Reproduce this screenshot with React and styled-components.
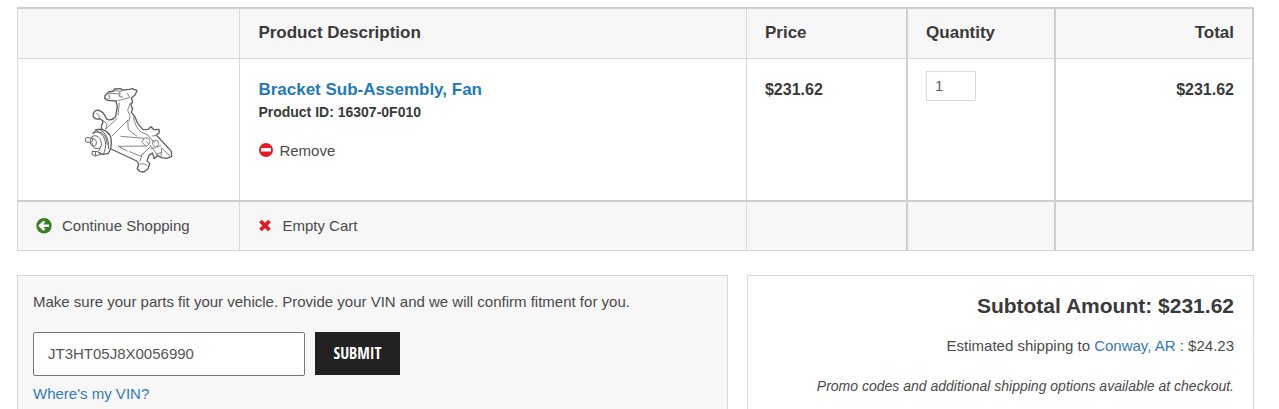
import React, { useState } from 'react';
import styled, { createGlobalStyle, css } from 'styled-components';

const GlobalStyle = createGlobalStyle`
  * {
    box-sizing: border-box;
  }
  html {
    scrollbar-width: none;
  }
  body {
    margin: 0;
    background: #fff;
    color: #4a4a4a;
    font-family: "Liberation Sans", Arial, Helvetica, sans-serif;
    font-size: 15px;
    line-height: 20px;
  }
`;

const Page = styled.main`
  padding: 7px 25px 0 17px;
`;

const CartTable = styled.table`
  width: 100%;
  border-collapse: collapse;
  table-layout: fixed;
  border: 1px solid #d6d6d6;
  border-top: 2px solid #cfcfcf;
  border-right: 2px solid #cfcfcf;
`;

const Col = styled.col`
  width: ${(props) => props.$width};
`;

const cell = css`
  padding: 0 18px;
  text-align: ${(props) => props.$align || 'left'};
  border-left: ${(props) => (props.$heavy ? '2px solid #cfcfcf' : '1px solid #d9d9d9')};
`;

const HeadCell = styled.th`
  ${cell}
  height: 50px;
  background: #f7f7f7;
  border-bottom: 1px solid #d9d9d9;
  color: #3a3a3a;
  font-size: 17px;
  font-weight: bold;
`;

const BodyCell = styled.td`
  ${cell}
  height: 143px;
  padding-top: ${(props) => props.$top || '21px'};
  vertical-align: top;
`;

const FootCell = styled.td`
  ${cell}
  height: 49px;
  background: #f7f7f7;
  border-top: 2px solid #cfcfcf;
`;

const Amount = styled.strong`
  color: #3a3a3a;
  font-size: 16px;
`;

const PartImage = styled.svg`
  display: block;
  width: 90px;
  height: 88px;
  margin: 0 auto;
`;

const ProductLink = styled.a`
  display: block;
  color: #1f7ab5;
  font-size: 17px;
  font-weight: bold;
  text-decoration: none;
`;

const ProductId = styled.div`
  margin-bottom: 17px;
  color: #3a3a3a;
  font-size: 14px;
  font-weight: bold;
  line-height: 24px;
`;

const Action = styled.button`
  display: flex;
  align-items: center;
  gap: ${(props) => props.$gap || '10px'};
  padding: 0;
  border: 0;
  background: none;
  color: inherit;
  font: inherit;
  cursor: pointer;
`;

const ShopLink = styled(Action).attrs({ as: 'a' })`
  text-decoration: none;
`;

const Icon = styled.svg`
  flex: none;
  width: ${(props) => props.$size}px;
  height: ${(props) => props.$size}px;
`;

const Quantity = styled.input`
  display: block;
  width: 50px;
  height: 30px;
  padding: 0 8px;
  border: 1px solid #d9d9d9;
  color: #666;
  font: inherit;
`;

const Panels = styled.div`
  display: grid;
  grid-template-columns: 7fr 5fr;
  gap: 19px;
  margin-top: 24px;
`;

const VinPanel = styled.form`
  padding: 16px 15px;
  border: 1px solid #d6d6d6;
  background: #f7f7f7;
`;

const SummaryPanel = styled.section`
  padding: 16px 19px;
  border: 1px solid #d9d9d9;
  text-align: right;
`;

const VinLabel = styled.label`
  display: block;
  margin-bottom: 20px;
`;

const VinRow = styled.div`
  display: flex;
  gap: 10px;
  margin-bottom: 8px;
`;

const VinInput = styled.input`
  width: 272px;
  height: 44px;
  padding: 0 14px;
  border: 1px solid #767676;
  border-radius: 2px;
  background: #fff;
  color: #555;
  font: inherit;
`;

const Submit = styled.button`
  width: 85px;
  height: 43px;
  padding: 0;
  border: 0;
  background: #222;
  color: #fff;
  font-family: "Open Sans Condensed", "Liberation Sans Narrow", "Open Sans", sans-serif;
  font-size: 16px;
  font-weight: bold;
  text-transform: uppercase;
`;

const TextLink = styled.a`
  color: #337ab7;
  text-decoration: none;
`;

const Subtotal = styled.h2`
  margin: 0 0 16px;
  color: #3a3a3a;
  font-size: 21px;
  line-height: 28px;
`;

const Shipping = styled.p`
  margin: 0 0 20px;
`;

const Promo = styled.p`
  margin: 0;
  font-size: 14px;
  font-style: italic;
`;

const BracketDrawing = () => (
  <PartImage viewBox="42 36 270 264" role="img" aria-label="Bracket Sub-Assembly, Fan">
    <g fill="none" stroke="#606060" strokeWidth="4" strokeLinejoin="round" strokeLinecap="round">
      <path d="M138 78 L113 76 L104 70 L105 62 L116 51 L131 48 L133 42 L153 41 L157 45 L178 43 L187 41 L201 47 L195 60 L184 69 L188 80 L183 90 L188 102 L184 112 L194 124 L203 145 L219 164 L234 163 L243 155 L252 164 L267 163 L268 173 L259 180 L304 229 L305 244 L290 250 L273 248 L263 241 L253 251 L247 234 L237 241 L231 257 L239 266 L234 281 L222 291 L209 289 L202 282 L206 267 L200 258 L123 222" />
      <path d="M138 78 L142 94 L137 124 Q125 140 110 132 L103 119 Q90 102 76 107 Q68 113 70 125 Q76 136 88 131 L100 138 L94 154 L96 163" />
      <path d="M70 176 Q80 160 96 163 Q119 171 123 190 Q127 217 115 235 L98 238 L86 232" />
    </g>
    <g fill="none" stroke="#666" strokeWidth="3" strokeLinejoin="round" strokeLinecap="round">
      <path d="M76 164 L97 164 M68 174 Q88 164 100 184 Q114 207 101 236 M82 170 Q110 172 112 208 M91 165 Q118 178 116 221" />
      <path d="M67 184 Q80 178 89 190 Q99 206 90 220 L75 220 L61 207 Q58 193 67 184 M68 191 Q80 191 79 205 Q77 216 68 212 Q62 203 68 191" />
      <path d="M65 190 L51 187 L45 192 L48 201 L60 202 M67 229 L66 239 L76 243 L94 237 M67 229 L82 230 L91 222 M76 242 L77 229" />
    </g>
    <g fill="none" stroke="#858585" strokeWidth="3" strokeLinejoin="round" strokeLinecap="round">
      <path d="M116 53 L119 69 L110 74 M120 55 L151 57 M144 77 L178 68 M155 45 L148 55 L149 65 L158 66 M172 55 L179 66 M133 47 L151 49" />
      <path d="M148 84 L144 120 M182 83 L173 106 L180 122 L177 138 M173 136 L126 183 M173 136 L175 164 L200 183 M106 163 L142 130 M190 126 Q196 158 213 171 L235 181 M102 139 L111 147 L107 163" />
      <path d="M153 184 L222 190 Q235 185 240 197 Q240 211 227 213 L145 214 M222 190 L216 202 L227 213 M235 182 L254 204 M251 197 L263 197 L266 209 L257 216 L248 208 Z M242 222 L272 212 M241 211 L263 241 M273 247 L275 219 L301 244 M179 230 L208 242 M240 216 L216 239 L210 258 M145 214 L171 228 M247 183 L260 181 M80 115 Q90 119 88 126" />
      <path d="M210 244 L222 235 M229 200 L235 207 M210 267 Q223 262 231 271 M258 238 L275 232" />
    </g>
  </PartImage>
);

const RemoveIcon = () => (
  <Icon $size={16} viewBox="0 0 16 16" aria-hidden="true">
    <circle cx="8" cy="7" r="7" fill="#e01b22" />
    <rect x="3" y="5" width="10" height="3.5" rx=".5" fill="#fff" />
  </Icon>
);

const BackIcon = () => (
  <Icon $size={16} viewBox="0 0 16 16" aria-hidden="true">
    <circle cx="8" cy="7.7" r="7.7" fill="#388023" />
    <path d="M13 7.7H4.5M8.4 3.4 4 7.7l4.4 4.3" fill="none" stroke="#fff" strokeWidth="2.6" />
  </Icon>
);

const CrossIcon = () => (
  <Icon $size={14} viewBox="0 0 14 14" aria-hidden="true">
    <path d="M2.5 2l9 9M11.5 2l-9 9" fill="none" stroke="#e01b22" strokeWidth="3.8" />
  </Icon>
);

const App = () => {
  const [quantity, setQuantity] = useState('1');
  const [vin, setVin] = useState('JT3HT05J8X0056990');

  return (
    <>
      <GlobalStyle />
      <Page>
        <CartTable>
          <colgroup>
            <Col $width="18%" />
            <Col />
            <Col $width="13%" />
            <Col $width="12%" />
            <Col $width="16%" />
          </colgroup>
          <thead>
            <tr>
              <HeadCell aria-label="Image" />
              <HeadCell>Product Description</HeadCell>
              <HeadCell>Price</HeadCell>
              <HeadCell $heavy>Quantity</HeadCell>
              <HeadCell $heavy $align="right">Total</HeadCell>
            </tr>
          </thead>
          <tbody>
            <tr>
              <BodyCell $top="28px"><BracketDrawing /></BodyCell>
              <BodyCell>
                <ProductLink href="#product">Bracket Sub-Assembly, Fan</ProductLink>
                <ProductId>Product ID: 16307-0F010</ProductId>
                <Action type="button" $gap="5px">
                  <RemoveIcon />
                  Remove
                </Action>
              </BodyCell>
              <BodyCell><Amount>$231.62</Amount></BodyCell>
              <BodyCell $heavy $top="12px">
                <Quantity
                  aria-label="Quantity"
                  value={quantity}
                  onChange={(e) => setQuantity(e.target.value)}
                />
              </BodyCell>
              <BodyCell $heavy $align="right"><Amount>$231.62</Amount></BodyCell>
            </tr>
          </tbody>
          <tfoot>
            <tr>
              <FootCell>
                <ShopLink href="#shop">
                  <BackIcon />
                  Continue Shopping
                </ShopLink>
              </FootCell>
              <FootCell>
                <Action type="button">
                  <CrossIcon />
                  Empty Cart
                </Action>
              </FootCell>
              <FootCell />
              <FootCell $heavy />
              <FootCell $heavy />
            </tr>
          </tfoot>
        </CartTable>

        <Panels>
          <VinPanel onSubmit={(e) => e.preventDefault()}>
            <VinLabel htmlFor="vin">
              Make sure your parts fit your vehicle. Provide your VIN and we will confirm fitment for you.
            </VinLabel>
            <VinRow>
              <VinInput id="vin" value={vin} onChange={(e) => setVin(e.target.value)} />
              <Submit type="submit">Submit</Submit>
            </VinRow>
            <TextLink href="#vin-help">Where&apos;s my VIN?</TextLink>
          </VinPanel>
          <SummaryPanel>
            <Subtotal>Subtotal Amount: $231.62</Subtotal>
            <Shipping>
              Estimated shipping to <TextLink href="#shipping">Conway, AR</TextLink> : $24.23
            </Shipping>
            <Promo>Promo codes and additional shipping options available at checkout.</Promo>
          </SummaryPanel>
        </Panels>
      </Page>
    </>
  );
};

export default App;
